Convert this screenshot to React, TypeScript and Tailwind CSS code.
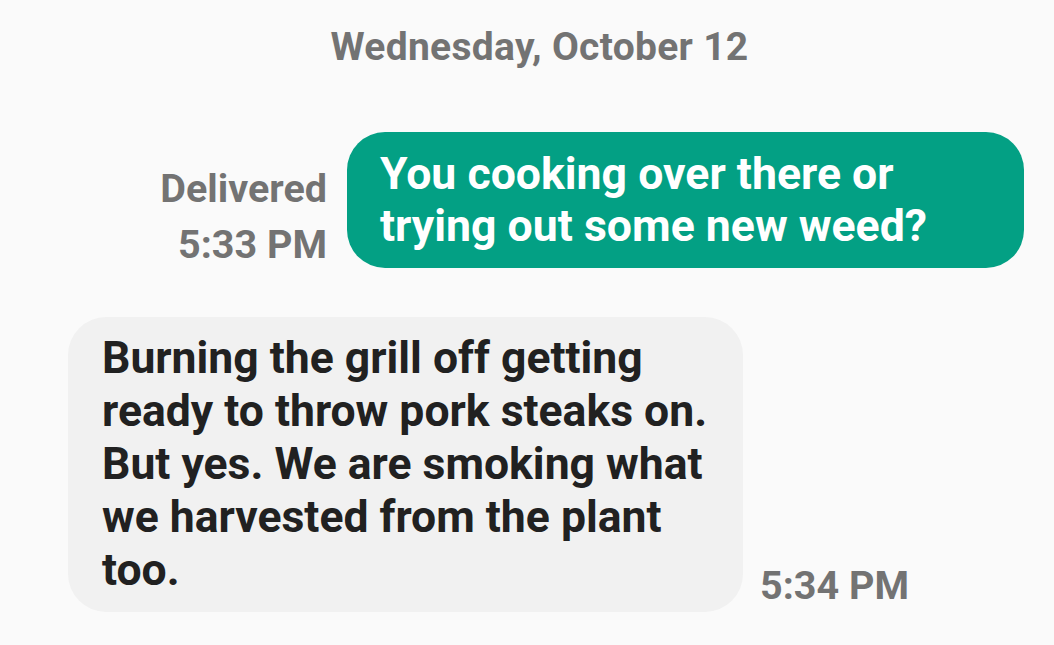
export default function App() {
  return (
    <div
      className="w-[1054px] h-[645px] bg-[#fafafa] overflow-hidden flex flex-col"
      style={{ fontFamily: "Roboto, 'Noto Sans', sans-serif" }}
    >
      {/* date header */}
      <div className="pt-[25px] pl-[25px] text-center text-[39px] leading-[44px] font-bold tracking-[0.3px] text-[#737373]">
        Wednesday, October 12
      </div>

      {/* outgoing */}
      <div className="mt-[63px] flex items-start justify-end pr-[30px] gap-[20px]">
        <div className="mt-[29px] text-right text-[39.5px] leading-[56px] font-bold text-[#737373]">
          <div>Delivered</div>
          <div>5:33 PM</div>
        </div>
        <div className="w-[677px] h-[136px] rounded-[38px] bg-[#03a084] pl-[33px] pt-[16px] text-white text-[44.6px] leading-[52px] font-bold whitespace-nowrap">
          You cooking over there or
          <br />
          trying out some new weed?
        </div>
      </div>

      {/* incoming */}
      <div className="mt-[44px] flex items-end pl-[68px] gap-[17px]">
        <div className="w-[675px] h-[295px] rounded-[38px] bg-[#f1f1f1] pl-[34px] pt-[15px] text-[#212121] text-[44.5px] leading-[53px] font-bold whitespace-nowrap">
          Burning the grill off getting
          <br />
          ready to throw pork steaks on.
          <br />
          But yes. We are smoking what
          <br />
          we harvested from the plant
          <br />
          too.
        </div>
        <div className="pb-[4px] text-[39.5px] leading-[44px] font-bold text-[#737373]">5:34 PM</div>
      </div>
    </div>
  );
}
